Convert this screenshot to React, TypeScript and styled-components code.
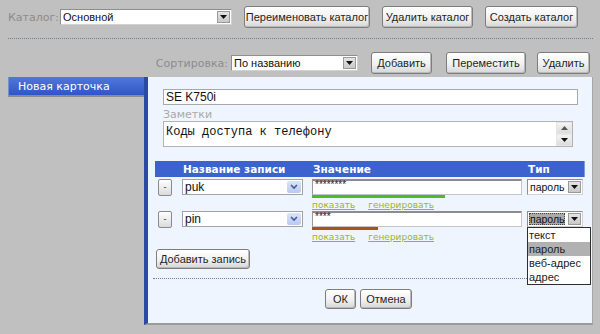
import React from "react";
import styled, { createGlobalStyle } from "styled-components";

const GlobalStyle = createGlobalStyle`
  html, body {
    margin: 0;
    padding: 0;
    background: #c0c0c0;
    width: 600px;
    height: 334px;
    overflow: hidden;
  }
  * {
    box-sizing: border-box;
  }
`;

const Page = styled.div`
  width: 600px;
  height: 334px;
  padding: 0 7px 0 8px;
  font-family: "Liberation Sans", Arial, sans-serif;
`;

const CatalogRow = styled.div`
  display: flex;
  align-items: center;
  margin-top: 6px;
  height: 22px;
  gap: 12px;
`;

const FieldLabel = styled.span<{ $w?: number }>`
  font-family: "DejaVu Sans", Verdana, sans-serif;
  font-size: 11px;
  color: #8c8c8c;
  width: ${(p) => (p.$w ? `${p.$w}px` : "auto")};
  margin-right: ${(p) => (p.$w ? 0 : 3)}px;
  flex: none;
`;

const LabelledField = styled.div`
  display: flex;
  align-items: center;
`;

const Dotted = styled.div<{ $inset?: boolean }>`
  margin-top: ${(p) => (p.$inset ? 9 : 10)}px;
  margin-left: ${(p) => (p.$inset ? -2 : 0)}px;
  border-top: 1px dotted #6a7da8;
  height: 0;
`;

const SortRow = styled.div`
  display: flex;
  align-items: center;
  justify-content: flex-end;
  margin-top: 13px;
  height: 22px;
  padding-right: 3px;
`;

const Button = styled.button<{ $w: number; $small?: boolean; $gap?: number }>`
  width: ${(p) => p.$w}px;
  height: ${(p) => (p.$small ? 20 : 22)}px;
  margin-left: ${(p) => p.$gap ?? 0}px;
  flex: none;
  padding: 0;
  border: 1px solid #7d7d7d;
  border-radius: 3px;
  background: linear-gradient(#ffffff 0%, #f1f1f1 55%, #d6d6d6 100%);
  box-shadow: inset -1px -1px 0 #b9b9b9;
  font-family: "Liberation Sans", Arial, sans-serif;
  font-size: 11px;
  color: #1e1e1e;
  cursor: pointer;
`;

const GraySelectBox = styled.div<{ $w: number }>`
  width: ${(p) => p.$w}px;
  height: 16px;
  display: flex;
  align-items: stretch;
  background: #ffffff;
  border: 1px solid #8e8e8e;
  border-right-color: #d2d2d2;
  border-bottom-color: #d2d2d2;
  flex: none;
`;

const SelectText = styled.span<{ $hl?: boolean; $size: number }>`
  flex: 1;
  display: flex;
  align-items: center;
  padding-left: 2px;
  font-size: ${(p) => p.$size}px;
  color: #111;
  white-space: nowrap;
  overflow: hidden;
  ${(p) =>
    p.$hl &&
    `
    margin: 1px 2px 1px 1px;
    padding-left: 1px;
    background: #a9a9a9;
    outline: 1px dotted #444;
    outline-offset: -1px;
  `}
`;

const GrayArrow = styled.span`
  width: 13px;
  flex: none;
  margin: 1px;
  display: flex;
  align-items: center;
  justify-content: center;
  background: linear-gradient(#e4e4e4, #c9c9c9);
  border: 1px solid #9a9a9a;
`;

const DownTriangle = () => (
  <svg width="7" height="4" viewBox="0 0 7 4">
    <path d="M0 0h7L3.5 4z" fill="#111" />
  </svg>
);

function GraySelect({
  w,
  value,
  hl,
  size = 11,
}: {
  w: number;
  value: string;
  hl?: boolean;
  size?: number;
}) {
  return (
    <GraySelectBox $w={w}>
      <SelectText $hl={hl} $size={size}>
        {value}
      </SelectText>
      <GrayArrow>
        <DownTriangle />
      </GrayArrow>
    </GraySelectBox>
  );
}

const Main = styled.div`
  display: flex;
  margin-top: 3px;
  height: 248px;
`;

const TabColumn = styled.div`
  width: 136px;
  flex: none;
`;

const Tab = styled.div`
  height: 20px;
  display: flex;
  align-items: center;
  padding-left: 9px;
  background: linear-gradient(#5177dc, #2f56c6);
  border-left: 1px solid #7a8fc8;
  border-bottom: 2px solid #8c8c8c;
  font-family: "DejaVu Sans", Verdana, sans-serif;
  font-size: 11px;
  color: #ffffff;
`;

const Card = styled.div`
  flex: 1;
  position: relative;
  background: #eef5fe;
  border-left: 4px solid #2b4aa6;
  border-right: 1px solid #a7a7a7;
  border-bottom: 2px solid #9b9b9b;
  padding: 12px 7px 0 7px;
`;

const TitleInput = styled.div`
  margin-left: 8px;
  width: 415px;
  height: 16px;
  background: #ffffff;
  border: 1px solid #a9a9a9;
  display: flex;
  align-items: center;
  padding-left: 2px;
  font-size: 12px;
  color: #111;
`;

const NotesLabel = styled.div`
  margin: 4px 0 0 8px;
  height: 12px;
  line-height: 12px;
  font-family: "DejaVu Sans", Verdana, sans-serif;
  font-size: 11px;
  color: #a9a9a9;
`;

const NotesBox = styled.div`
  margin-left: 8px;
  width: 410px;
  height: 26px;
  display: flex;
  background: #ffffff;
  border: 1px solid #b3b3b3;
`;

const NotesText = styled.div`
  flex: 1;
  padding: 3px 0 0 2px;
  font-family: "Liberation Mono", "Courier New", monospace;
  font-size: 12px;
  color: #111;
`;

const ScrollBar = styled.div`
  width: 16px;
  display: flex;
  flex-direction: column;
  background: #ebebeb;
`;

const ScrollBtn = styled.div`
  flex: 1;
  display: flex;
  align-items: center;
  justify-content: center;
  background: linear-gradient(#f4f4f4, #dcdcdc);
  border: 1px solid #e6e6e6;
`;

const UpTriangle = () => (
  <svg width="7" height="4" viewBox="0 0 7 4">
    <path d="M0 4h7L3.5 0z" fill="#555" />
  </svg>
);

const TableHeader = styled.div`
  display: grid;
  grid-template-columns: 27px 130px 215px 1fr;
  margin-top: 14px;
  margin-bottom: 2px;
  height: 16px;
  align-items: center;
  background: #3b62cd;
  border-right: 1px solid #7f9be0;
`;

const HeaderCell = styled.span`
  font-family: "DejaVu Sans", Verdana, sans-serif;
  font-weight: bold;
  font-size: 10.5px;
  color: #ffffff;
  padding-left: 1px;
`;

const EntryRow = styled.div`
  display: grid;
  grid-template-columns: 27px 130px 215px 1fr;
  height: 32px;
  align-items: start;
`;

const MinusButton = styled.button`
  margin: 0 0 0 3px;
  width: 14px;
  height: 17px;
  padding: 0;
  border: 1px solid #8a8a8a;
  border-radius: 2px;
  background: linear-gradient(#ffffff, #dadada);
  font-size: 9px;
  line-height: 9px;
  color: #333;
`;

const NameSelectBox = styled.div`
  width: 121px;
  height: 16px;
  display: flex;
  background: #ffffff;
  border: 1px solid #a3a3a3;
`;

const NameText = styled.span`
  flex: 1;
  padding-left: 2px;
  font-size: 12px;
  line-height: 14px;
  color: #111;
`;

const BlueArrow = styled.span`
  width: 14px;
  margin: 1px;
  display: flex;
  align-items: center;
  justify-content: center;
  border-radius: 2px;
  background: linear-gradient(#dbe5fa, #b7caf2);
`;

const Chevron = () => (
  <svg width="8" height="6" viewBox="0 0 8 6">
    <path d="M1 1l3 3 3-3" stroke="#4a5c8c" strokeWidth="1.6" fill="none" />
  </svg>
);

const ValueCell = styled.div`
  display: flex;
  flex-direction: column;
`;

const ValueInput = styled.div`
  width: 210px;
  height: 16px;
  background: #ffffff;
  border: 1px solid #c4c4c4;
  border-top: 2px solid #8c8c8c;
  border-left-color: #9a9a9a;
  padding-left: 2px;
  font-size: 10px;
  line-height: 8px;
  color: #222;
`;

const Strength = styled.div`
  height: 3px;
`;

const Links = styled.div`
  display: flex;
  gap: 13px;
  margin-top: 2px;
`;

const Link = styled.a`
  font-family: "DejaVu Sans", Verdana, sans-serif;
  font-size: 9px;
  color: #9cb51c;
  text-decoration: underline;
`;

const TypeCell = styled.div`
  position: relative;
`;

const DropList = styled.div`
  position: absolute;
  top: 16px;
  left: 0;
  width: 64px;
  background: #ffffff;
  border: 1px solid #2e2e2e;
  z-index: 2;
`;

const DropItem = styled.div<{ $active?: boolean }>`
  height: 14px;
  line-height: 14px;
  padding-left: 1px;
  font-size: 11px;
  color: #222;
  background: ${(p) => (p.$active ? "#b1b1b1" : "transparent")};
`;

const AddRow = styled.div`
  margin-top: 6px;
  margin-left: 1px;
`;

const Actions = styled.div`
  display: flex;
  justify-content: center;
  gap: 4px;
  margin-top: 10px;
  padding-right: 3px;
`;

type Entry = {
  name: string;
  mask: string;
  color: string;
  strength: number;
  open?: boolean;
};

const entries: Entry[] = [
  { name: "puk", mask: "********", color: "#4cbb2a", strength: 133 },
  { name: "pin", mask: "****", color: "#a4580f", strength: 66, open: true },
];

const types = ["текст", "пароль", "веб-адрес", "адрес"];

export default function App() {
  return (
    <Page>
      <GlobalStyle />
      <CatalogRow>
        <LabelledField>
          <FieldLabel $w={52}>Каталог:</FieldLabel>
          <GraySelect w={172} value="Основной" />
        </LabelledField>
        <Button $w={126}>Переименовать каталог</Button>
        <Button $w={91}>Удалить каталог</Button>
        <Button $w={93}>Создать каталог</Button>
      </CatalogRow>
      <Dotted />
      <SortRow>
        <FieldLabel>Сортировка:</FieldLabel>
        <GraySelect w={127} value="По названию" />
        <Button $w={61} $gap={13}>
          Добавить
        </Button>
        <Button $w={80} $gap={14}>
          Переместить
        </Button>
        <Button $w={53} $gap={11}>
          Удалить
        </Button>
      </SortRow>
      <Main>
        <TabColumn>
          <Tab>Новая карточка</Tab>
        </TabColumn>
        <Card>
          <TitleInput>SE K750i</TitleInput>
          <NotesLabel>Заметки</NotesLabel>
          <NotesBox>
            <NotesText>Коды доступа к телефону</NotesText>
            <ScrollBar>
              <ScrollBtn>
                <UpTriangle />
              </ScrollBtn>
              <ScrollBtn>
                <DownTriangle />
              </ScrollBtn>
            </ScrollBar>
          </NotesBox>
          <TableHeader>
            <span />
            <HeaderCell>Название записи</HeaderCell>
            <HeaderCell>Значение</HeaderCell>
            <HeaderCell>Тип</HeaderCell>
          </TableHeader>
          {entries.map((e) => (
            <EntryRow key={e.name}>
              <MinusButton>-</MinusButton>
              <NameSelectBox>
                <NameText>{e.name}</NameText>
                <BlueArrow>
                  <Chevron />
                </BlueArrow>
              </NameSelectBox>
              <ValueCell>
                <ValueInput>{e.mask}</ValueInput>
                <Strength style={{ width: e.strength, background: e.color }} />
                <Links>
                  <Link>показать</Link>
                  <Link>генерировать</Link>
                </Links>
              </ValueCell>
              <TypeCell>
                <GraySelect w={56} value="пароль" hl={e.open} size={10.5} />
                {e.open && (
                  <DropList>
                    {types.map((t) => (
                      <DropItem key={t} $active={t === "пароль"}>
                        {t}
                      </DropItem>
                    ))}
                  </DropList>
                )}
              </TypeCell>
            </EntryRow>
          ))}
          <AddRow>
            <Button $w={94} $small>
              Добавить запись
            </Button>
          </AddRow>
          <Dotted $inset />
          <Actions>
            <Button $w={31} $small>
              ОК
            </Button>
            <Button $w={52} $small>
              Отмена
            </Button>
          </Actions>
        </Card>
      </Main>
    </Page>
  );
}
